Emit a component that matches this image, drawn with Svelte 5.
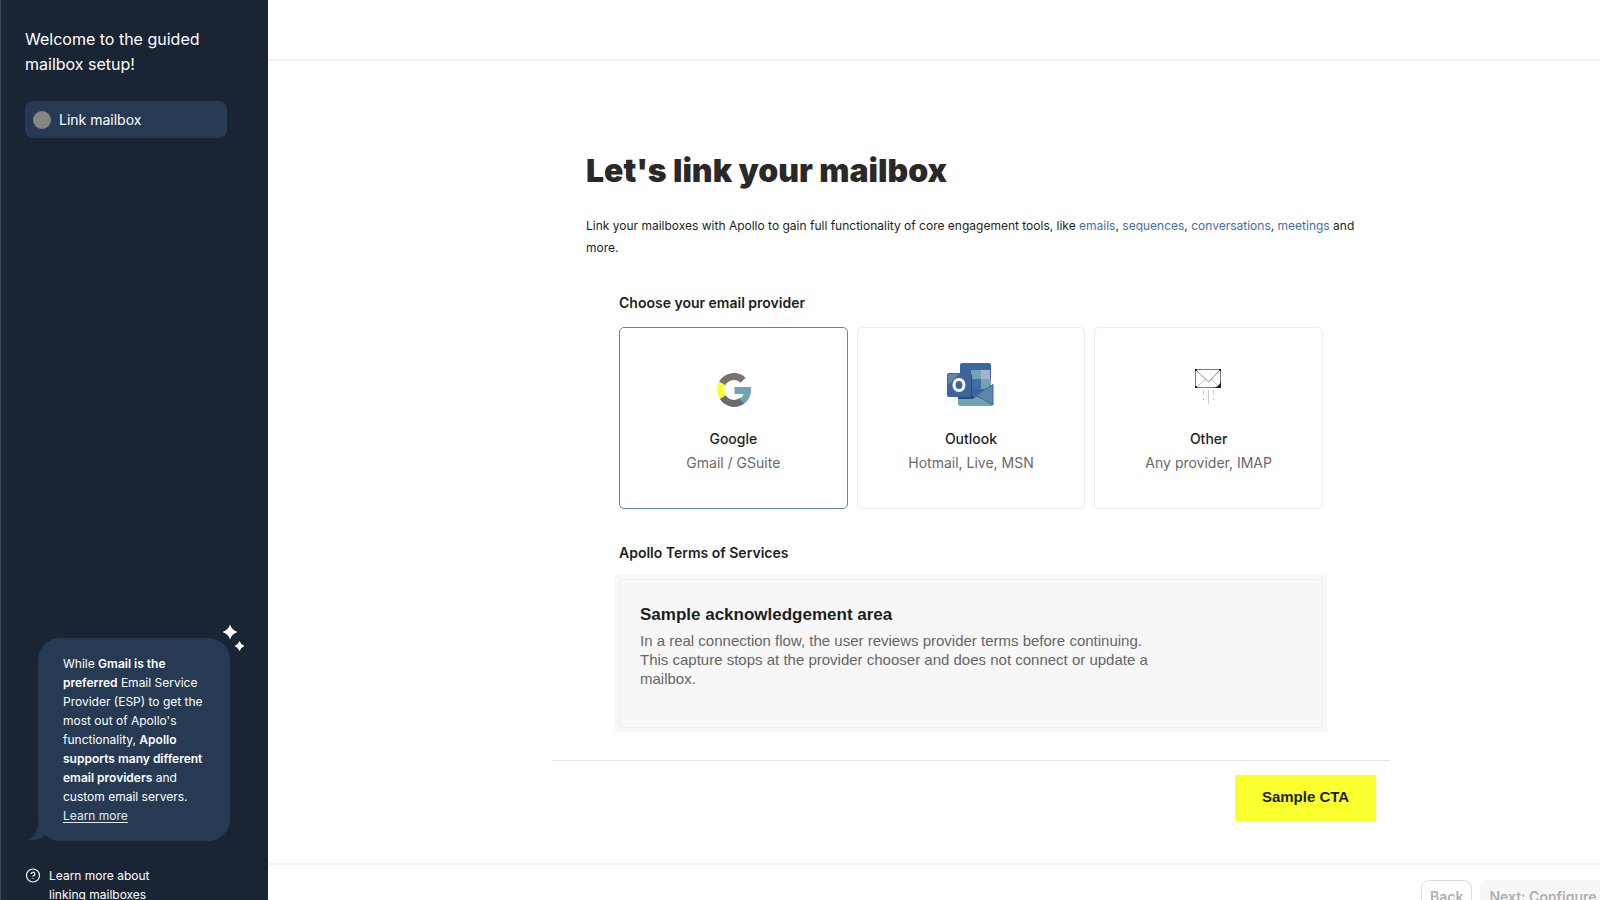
<script lang="ts">
  type Provider = { id: string; name: string; hint: string };

  const providers: Provider[] = [
    { id: 'google', name: 'Google', hint: 'Gmail / GSuite' },
    { id: 'outlook', name: 'Outlook', hint: 'Hotmail, Live, MSN' },
    { id: 'other', name: 'Other', hint: 'Any provider, IMAP' }
  ];

  let selected = $state('google');
</script>

<div class="viewport">
  <div class="shell">
    <aside class="sidebar">
      <h2 class="welcome">Welcome to the guided mailbox setup!</h2>
      <button class="step" type="button" aria-current="step">
        <span class="dot"></span>
        Link mailbox
      </button>

      <div class="bubble">
        <svg class="sparkles" viewBox="0 0 24 28" aria-hidden="true">
          <path d="M8 0.500Q9.800 6.200 15.500 8Q9.800 9.800 8 15.500Q6.200 9.800 0.500 8Q6.200 6.200 8 0.500Z" />
          <path d="M17.500 17Q18.800 20.700 22.500 22Q18.800 23.300 17.500 27Q16.200 23.300 12.500 22Q16.200 20.700 17.500 17Z" />
        </svg>
        <svg class="tail" viewBox="0 0 24 20" aria-hidden="true">
          <path d="M10 0Q10 10 0 16Q9 17 17 12L20 0Z" />
        </svg>
        <p>
          While <strong>Gmail is the preferred</strong> Email Service Provider (ESP) to get the most out of Apollo's
          functionality, <strong>Apollo supports many different email providers</strong> and custom email servers.
          <a href="#learn-more">Learn more</a>
        </p>
      </div>

      <a class="help" href="#linking-mailboxes">
        <svg viewBox="0 0 16 16" aria-hidden="true">
          <circle cx="8" cy="8" r="6.500" />
          <path d="M6.200 6.600a1.800 1.800 0 1 1 2.700 1.500c-.6.350-.9.600-.9 1.200" />
          <path d="M8 10.800v.6" />
        </svg>
        <span>Learn more about linking mailboxes</span>
      </a>
    </aside>

    <div class="main">
      <header class="topbar"></header>

      <main class="content">
        <div class="intro">
          <h1>Let's link your mailbox</h1>
          <p>
            Link your mailboxes with Apollo to gain full functionality of core engagement tools, like
            <a href="#emails">emails</a>, <a href="#sequences">sequences</a>,
            <a href="#conversations">conversations</a>, <a href="#meetings">meetings</a> and more.
          </p>
        </div>

        <div class="form">
          <h3 id="provider-label">Choose your email provider</h3>
          <div class="cards" role="radiogroup" aria-labelledby="provider-label">
            {#each providers as p (p.id)}
              <label class="card" class:active={selected === p.id}>
                <input type="radio" name="provider" value={p.id} bind:group={selected} />
                {#if p.id === 'google'}
                  <svg viewBox="-1 0 56 56" aria-hidden="true">
                    <g fill="none" stroke-width="7">
                      <path stroke="#7c7070" d="M37.200 24.200A13.500 13.500 0 0 0 16.200 27.500" />
                      <path stroke="#faff2e" d="M16.200 27.500A13.500 13.500 0 0 0 16.800 41.200" />
                      <path stroke="#686c6d" d="M16.800 41.200A13.500 13.500 0 0 0 36.500 44.500" />
                    </g>
                    <path fill="#70a3b3" d="M28.500 31H45Q46 41.500 38.800 47.500L33.600 43.200Q36.800 41 37.600 38H28.500Z" />
                  </svg>
                {:else if p.id === 'outlook'}
                  <svg viewBox="0 0 56 56" aria-hidden="true">
                    <rect x="17" y="7" width="31" height="36" rx="2" fill="#3b659c" />
                    <path fill="#70a3b3" d="M28 14h10v9H28zM38 23h10v10H38z" />
                    <path fill="#a5b4cb" d="M38 14h9v9H38z" />
                    <path fill="#3f6ea0" d="M28 23h10v10H28z" />
                    <path fill="#70a3b3" d="M15 33L50 47.500Q50 50 47.500 50H17.500Q15 50 15 47.500Z" />
                    <path fill="#6285aa" stroke="#3b659c" d="M50 28.500V49L33 39Z" />
                    <path fill="#294d80" d="M15 18h13l1 1v20l4 2-4 2H15z" />
                    <rect x="4" y="17" width="24" height="24" rx="2" fill="#3b659c" />
                    <path fill="#6285aa" d="M5 18h11L5 29z" />
                    <ellipse cx="16" cy="29" rx="5" ry="5.500" fill="none" stroke="#fff" stroke-width="3" />
                  </svg>
                {:else}
                  <svg viewBox="1 0 56 56" fill="none" aria-hidden="true">
                    <path stroke="#b8b8b8" d="M16 31.500L26 23M40 31.500L31 23" />
                    <path stroke="#909090" d="M16 14L28.500 26L40 14" />
                    <path stroke="#777b7e" d="M15.500 13.500h25v18h-25z" />
                    <path fill="#17222d" d="M41 25v7h-8q6-1 8-7z" />
                    <path fill="#17222d" d="M15 13h2v2h-2zM39 13h2v2h-2zM15 30h2v2h-2z" />
                    <path stroke="#c8c8c8" d="M28.500 34v14" />
                    <path stroke="#c8c8c8" stroke-dasharray="5 3" d="M23.500 34v10M33.500 34v10" />
                  </svg>
                {/if}
                <span class="name">{p.name}</span>
                <span class="hint">{p.hint}</span>
              </label>
            {/each}
          </div>

          <h3 class="terms-title">Apollo Terms of Services</h3>
          <section class="terms">
            <div class="terms-inner">
              <h4>Sample acknowledgement area</h4>
              <p>
                In a real connection flow, the user reviews provider terms before continuing. This capture stops at the
                provider chooser and does not connect or update a mailbox.
              </p>
            </div>
          </section>
        </div>

        <div class="actions">
          <button class="cta" type="button">Sample CTA</button>
        </div>
      </main>

      <footer class="footer">
        <button class="back" type="button" disabled>Back</button>
        <button class="next" type="button" disabled>Next: Configure mailbox</button>
      </footer>
    </div>
  </div>
</div>

<style>
  :global(body) {
    font-family: Inter, 'Liberation Sans', sans-serif;
    color: #1c1f21;
    background: #fff;
  }
  h1,
  h2,
  h3,
  h4,
  p {
    margin: 0;
  }
  button {
    font-family: inherit;
  }
  .viewport {
    height: 100vh;
    overflow: hidden;
  }
  /* the wizard is a little larger than the window and gets clipped */
  .shell {
    display: flex;
    width: calc(100vw + 74px);
    height: calc(100vh + 32px);
  }

  .sidebar {
    box-sizing: border-box;
    flex: none;
    display: flex;
    flex-direction: column;
    width: 268px;
    padding: 27px 41px 28px 24px;
    border-left: 1px solid #3b4b5c;
    background: #192534;
    color: #fff;
  }
  .welcome {
    font-size: 16px;
    line-height: 25px;
    font-weight: 400;
  }
  .step {
    display: flex;
    align-items: center;
    gap: 8px;
    height: 37px;
    margin-top: 24px;
    padding: 0 8px;
    border: none;
    border-radius: 8px;
    background: #263b53;
    color: #fff;
    font-size: 14px;
    font-weight: 400;
    text-align: left;
  }
  .dot {
    width: 18px;
    height: 18px;
    border-radius: 50%;
    background: #868580;
  }
  .bubble {
    position: relative;
    width: 142px;
    margin-top: auto;
    margin-left: 13px;
    padding: 16px 25px;
    border-radius: 22px;
    background: #263b53;
    font-size: 12px;
    line-height: 19px;
  }
  .bubble a {
    color: #e4e8ee;
    text-underline-offset: 2px;
  }
  .bubble strong {
    font-weight: 600;
  }
  .sparkles {
    position: absolute;
    top: -14px;
    right: -16px;
    width: 24px;
    height: 28px;
    fill: #fff;
  }
  .tail {
    position: absolute;
    left: -10px;
    bottom: -3px;
    width: 24px;
    height: 20px;
    fill: #263b53;
  }
  .help {
    display: flex;
    gap: 8px;
    width: 140px;
    margin-top: 25px;
    color: #fff;
    font-size: 12px;
    line-height: 19px;
    text-decoration: none;
  }
  .help svg {
    flex: none;
    width: 16px;
    height: 19px;
    fill: none;
    stroke: #fff;
    stroke-width: 1.2;
  }

  .main {
    flex: 1;
    min-width: 0;
    display: flex;
    flex-direction: column;
  }
  .topbar {
    height: 59px;
    border-bottom: 2px solid #f1f1f1;
  }
  .content {
    flex: 1;
    width: 100%;
    max-width: 838px;
    margin: 0 auto;
  }
  .intro {
    padding: 88px 34px 0;
  }
  h1 {
    font-size: 32px;
    line-height: 44px;
    font-weight: 900;
    color: #2a2828;
  }
  .intro p {
    margin-top: 22px;
    font-size: 12px;
    line-height: 22px;
  }
  .intro a {
    color: #456f9c;
    text-decoration: none;
  }
  .form {
    padding: 34px 67px 0;
  }
  h3 {
    font-size: 14px;
    line-height: 20px;
    font-weight: 600;
  }
  .cards {
    display: grid;
    grid-template-columns: repeat(3, 1fr);
    gap: 9px;
    margin-top: 14px;
  }
  .card {
    display: flex;
    flex-direction: column;
    align-items: center;
    padding: 28px 8px 33px;
    border: 1px solid #ededed;
    border-radius: 5px;
    font-size: 14px;
    line-height: 24px;
    cursor: pointer;
  }
  .card.active {
    border-color: #5f82a8;
  }
  .card input {
    position: absolute;
    opacity: 0;
    pointer-events: none;
  }
  .card svg {
    width: 56px;
    height: 56px;
    margin-bottom: 15px;
  }
  .name {
    font-weight: 500;
  }
  .hint {
    color: #6b6869;
  }
  .terms-title {
    margin-top: 34px;
  }
  .terms {
    margin: 12px -4px 0;
    padding: 4px;
    background: #f7f7f7;
    font-family: 'Liberation Sans', Arial, sans-serif;
  }
  .terms-inner {
    min-height: 105px;
    padding: 25px 20px 17px;
    border: 1px solid #eee;
    border-radius: 4px;
  }
  h4 {
    font-size: 17px;
    line-height: 20px;
  }
  .terms p {
    max-width: 515px;
    margin-top: 6px;
    color: #666;
    font-size: 15px;
    line-height: 19px;
  }
  .actions {
    display: flex;
    justify-content: flex-end;
    margin-top: 28px;
    padding: 14px;
    border-top: 1px solid #e6e6e6;
  }
  .cta {
    width: 141px;
    height: 46px;
    padding: 0 0 3px;
    border: none;
    background: #faff2e;
    color: #1c1f21;
    font: bold 15px 'Liberation Sans', Arial, sans-serif;
  }
  .footer {
    display: flex;
    justify-content: flex-end;
    gap: 8px;
    padding: 15px 12px 20px;
    border-top: 2px solid #f1f1f1;
  }
  .footer button {
    height: 32px;
    padding: 0 8px;
    border: 1px solid #dcdcda;
    border-radius: 8px;
    background: #fff;
    color: #b0b0b0;
    font-size: 14px;
    font-weight: 600;
  }
  .footer .next {
    border-color: #f7f7f7;
    background: #f7f7f7;
  }
</style>
